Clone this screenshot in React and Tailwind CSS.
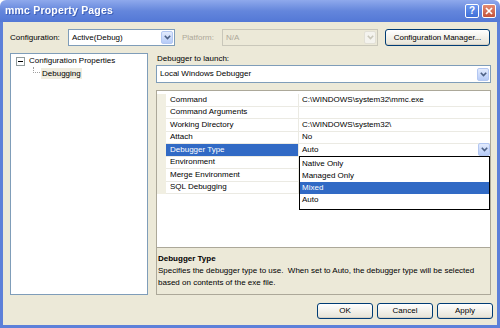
import React from 'react';

const rows = [
  { name: 'Command', value: 'C:\\WINDOWS\\system32\\mmc.exe' },
  { name: 'Command Arguments', value: '' },
  { name: 'Working Directory', value: 'C:\\WINDOWS\\system32\\' },
  { name: 'Attach', value: 'No' },
  { name: 'Debugger Type', value: 'Auto', selected: true },
  { name: 'Environment', value: '' },
  { name: 'Merge Environment', value: '' },
  { name: 'SQL Debugging', value: '' },
];

const options = ['Native Only', 'Managed Only', 'Mixed', 'Auto'];

function Chevron({ color = '#4d6185' }) {
  return (
    <svg width="7" height="5" viewBox="0 0 7 5">
      <path d="M0.8 0.8 L3.5 3.6 L6.2 0.8" stroke={color} strokeWidth="1.6" fill="none" />
    </svg>
  );
}

function DropButton({ disabled }) {
  return (
    <div
      className={
        disabled
          ? 'w-[12px] h-[13px] flex items-center justify-center rounded-[2px] bg-[#f4f3ee] border border-[#e2e0d6]'
          : 'w-[12px] h-[13px] flex items-center justify-center rounded-[2px] bg-gradient-to-b from-[#e3ebfd] to-[#b6cbf7] border border-[#b3c7f2]'
      }
    >
      <Chevron color={disabled ? '#c9c7ba' : '#4d6185'} />
    </div>
  );
}

function Select({ text, className, disabled }) {
  return (
    <div
      className={
        'flex items-center pl-[3px] pr-px border ' +
        (disabled ? 'border-[#c9c7ba] bg-[#ece9d8] text-[#aca899] ' : 'border-[#7f9db9] bg-white text-black ') +
        className
      }
    >
      <span className="flex-1 leading-none">{text}</span>
      <DropButton disabled={disabled} />
    </div>
  );
}

function XPButton({ children, className }) {
  return (
    <div
      className={
        'flex items-center justify-center rounded-[3px] border border-[#003c74] bg-gradient-to-b from-white to-[#e6e3d6] shadow-[inset_0_-1px_0_#d6d0c5] ' +
        className
      }
    >
      {children}
    </div>
  );
}

export default function App() {
  return (
    <div className="w-[500px] h-[328px] flex flex-col font-['Liberation_Sans',Arial,sans-serif] text-[8px] text-black select-none">
      {/* Title bar */}
      <div className="h-[22px] flex items-center justify-between pl-[5px] pr-[4px] rounded-t-[6px] bg-gradient-to-b from-[#8fa9ec] via-[#6486dc] to-[#5378d6]">
        <span className="text-white font-bold text-[10.5px] tracking-[0.2px] drop-shadow-[1px_1px_0_#3d5fb8]">mmc Property Pages</span>
        <div className="flex items-center gap-[3px]">
          <div className="w-[14px] h-[14px] rounded-[2px] border border-white bg-gradient-to-b from-[#6b97f0] to-[#3f6fd8] flex items-center justify-center text-white font-bold text-[10px] leading-none">?</div>
          <div className="w-[14px] h-[14px] rounded-[2px] border border-white bg-gradient-to-b from-[#e38a72] to-[#c4533b] flex items-center justify-center">
            <svg width="8" height="8" viewBox="0 0 8 8">
              <path d="M1 1 L7 7 M7 1 L1 7" stroke="white" strokeWidth="1.7" />
            </svg>
          </div>
        </div>
      </div>

      {/* Body */}
      <div className="flex-1 flex flex-col bg-[#ece9d8] border-x-[3px] border-b-[3px] border-[#5d80d9]">
        {/* Configuration row */}
        <div className="mt-[7px] h-[17px] flex items-center pl-[7px]">
          <span className="w-[58px]">Configuration:</span>
          <Select text="Active(Debug)" className="w-[107px] h-[17px]" />
          <span className="w-[40px] ml-[7px] text-[#aca899]">Platform:</span>
          <Select text="N/A" className="w-[156px] h-[17px]" disabled />
          <XPButton className="ml-[7px] w-[105px] h-[17px]">Configuration Manager...</XPButton>
        </div>

        {/* Main area */}
        <div className="mt-[7px] h-[242px] flex">
          {/* Tree */}
          <div className="ml-[7px] w-[138px] border border-[#7f9db9] bg-white pt-px">
            <div className="h-[12px] flex items-center pl-[5px]">
              <div className="w-[9px] h-[9px] border border-[#919b9c] bg-white flex items-center justify-center">
                <div className="w-[5px] h-px bg-black" />
              </div>
              <span className="ml-[4px]">Configuration Properties</span>
            </div>
            <div className="h-[12px] flex pl-[22px]">
              <div className="w-[7px] h-[6px] border-l border-b border-dotted border-[#a0a0a0]" />
              <span className="ml-px self-center px-px bg-[#efecdf] leading-[11px]">Debugging</span>
            </div>
          </div>

          {/* Right column */}
          <div className="ml-[8px] w-[335px] flex flex-col">
            <div className="h-[11px] leading-[11px] pl-px">Debugger to launch:</div>
            <Select text="Local Windows Debugger" className="mt-px h-[18px]" />

            <div className="mt-[7px] flex-1 flex flex-col border border-[#aca899] relative">
              {/* Property grid */}
              <div className="flex-1 bg-white pt-[3px]">
                {rows.map((r) => (
                  <div key={r.name} className="h-[12.5px] flex">
                    <div className="w-[9px] bg-[#f1efe2]" />
                    <div
                      className={
                        'w-[133px] flex items-center pl-[4px] border-r border-b border-[#ebeae3] ' +
                        (r.selected ? 'bg-[#316ac5] text-white' : '')
                      }
                    >
                      {r.name}
                    </div>
                    <div className="flex-1 flex items-center pl-[3px] border-b border-[#ebeae3]">
                      <span className="flex-1">{r.value}</span>
                      {r.selected && <DropButton />}
                    </div>
                  </div>
                ))}
              </div>

              {/* Dropdown list */}
              <div className="absolute left-[142px] top-[65px] w-[191px] h-[54px] bg-white border border-black pt-px">
                {options.map((o) => (
                  <div
                    key={o}
                    className={
                      'h-[12px] flex items-center pl-[2px] ' + (o === 'Mixed' ? 'bg-[#316ac5] text-white' : '')
                    }
                  >
                    {o}
                  </div>
                ))}
              </div>

              {/* Description */}
              <div className="h-[47px] border-t border-[#aca899] bg-[#ece9d8] pl-px pt-[5px] leading-[12px]">
                <div className="font-bold">Debugger Type</div>
                <div className="whitespace-nowrap">
                  Specifies the debugger type to use.&nbsp; When set to Auto, the debugger type will be selected
                </div>
                <div className="whitespace-nowrap">based on contents of the exe file.</div>
              </div>
            </div>
          </div>
        </div>

        {/* Buttons */}
        <div className="mt-[8px] h-[16px] flex justify-end gap-[4px] pr-[4px]">
          <XPButton className="w-[56px] h-[16px]">OK</XPButton>
          <XPButton className="w-[56px] h-[16px]">Cancel</XPButton>
          <XPButton className="w-[56px] h-[16px]">Apply</XPButton>
        </div>
      </div>
    </div>
  );
}
